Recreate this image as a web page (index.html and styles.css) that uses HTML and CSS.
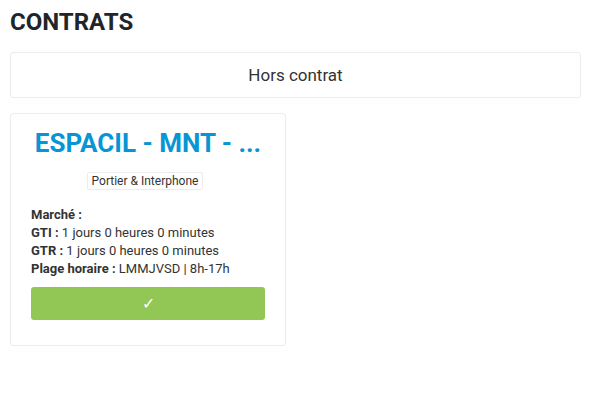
FILE: index.html
```html
<!DOCTYPE html>
<html lang="fr">
<head>
<meta charset="utf-8">
<link rel="stylesheet" href="styles.css">
</head>
<body>
<div class="page">
  <h1 class="title">CONTRATS</h1>
  <div class="hors">Hors contrat</div>
  <div class="cards">
    <div class="card">
      <h2 class="card-title">ESPACIL - MNT - ...</h2>
      <div class="badge-row"><span class="badge">Portier &amp; Interphone</span></div>
      <div class="info">
        <div><b>Marché :</b></div>
        <div><b>GTI :</b> 1 jours 0 heures 0 minutes</div>
        <div><b>GTR :</b> 1 jours 0 heures 0 minutes</div>
        <div><b>Plage horaire :</b> LMMJVSD | 8h-17h</div>
      </div>
      <button class="ok">✓</button>
    </div>
  </div>
</div>
</body>
</html>
```
FILE: styles.css
```css
html, body { margin: 0; padding: 0; background: #fff; }
body { font-family: Roboto, "Liberation Sans", sans-serif; color: #212529; }
.page { padding: 8px 15px 10px 10px; }
.title { margin: 0; font-size: 24px; font-weight: 700; line-height: 28px; color: #212529; }
.hors {
  margin-top: 16px;
  border: 1px solid #ececec;
  border-radius: 3px;
  height: 44px;
  display: flex; align-items: center; justify-content: center;
  font-size: 17px; color: #333;
}
.cards { margin-top: 15px; display: flex; }
.card {
  border: 1px solid #ececec;
  border-radius: 3px;
  padding: 12px 20px 25px 20px;
  box-sizing: border-box;
  width: 276px;
}
.card-title { margin: 0; text-align: center; font-size: 26px; line-height: 34px; font-weight: 700; color: #0795d4; }
.badge-row { text-align: center; margin-top: 10px; padding-right: 6px; }
.badge {
  display: inline-block;
  border: 1px solid #ececec;
  border-radius: 2px;
  font-size: 12px; line-height: 16px;
  padding: 0 4px;
  color: #333;
}
.info { margin-top: 16px; font-size: 13px; line-height: 18px; color: #333; }
.info b { font-weight: 700; }
.ok {
  display: block; width: 100%;
  margin-top: 9px;
  height: 33px;
  border: 0; border-radius: 3px;
  background: #93c755; color: #fff;
  font-size: 16px; font-family: inherit;
}
```
